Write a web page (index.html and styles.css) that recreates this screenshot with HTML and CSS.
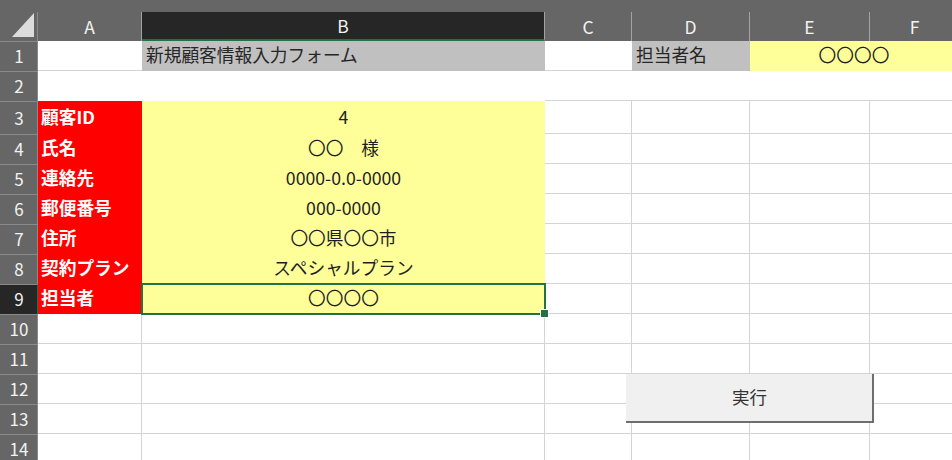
FILE: index.html
```html
<!DOCTYPE html>
<html lang="ja">
<head>
<meta charset="utf-8">
<title>新規顧客情報入力フォーム</title>
<link rel="stylesheet" href="styles.css">
</head>
<body>
<div class="sheet">
  <div class="topstrip"></div>

  <div class="corner"><svg width="38" height="29" viewBox="0 0 38 29"><polygon points="12,25 34,25 34,1" fill="#dcdcdc"/></svg></div>
  <div class="colhead">A</div>
  <div class="colhead colsel">B</div>
  <div class="colhead">C</div>
  <div class="colhead">D</div>
  <div class="colhead">E</div>
  <div class="colhead">F</div>

  <div class="rowhead">1</div>
  <div class="cell bline"></div>
  <div class="cell grayfill left">新規顧客情報入力フォーム</div>
  <div class="cell bline"></div>
  <div class="cell grayfill left">担当者名</div>
  <div class="cell yellow span2 e1">〇〇〇〇</div>

  <div class="rowhead">2</div>
  <div class="cell"></div>
  <div class="cell"></div>
  <div class="cell bline"></div>
  <div class="cell bline"></div>
  <div class="cell bline"></div>
  <div class="cell bline"></div>

  <div class="rowhead">3</div>
  <div class="cell label">顧客ID</div>
  <div class="cell yellow">4</div>
  <div class="cell grid"></div><div class="cell grid"></div><div class="cell grid"></div><div class="cell grid"></div>

  <div class="rowhead">4</div>
  <div class="cell label">氏名</div>
  <div class="cell yellow">〇〇　様</div>
  <div class="cell grid"></div><div class="cell grid"></div><div class="cell grid"></div><div class="cell grid"></div>

  <div class="rowhead">5</div>
  <div class="cell label">連絡先</div>
  <div class="cell yellow">0000-0.0-0000</div>
  <div class="cell grid"></div><div class="cell grid"></div><div class="cell grid"></div><div class="cell grid"></div>

  <div class="rowhead">6</div>
  <div class="cell label">郵便番号</div>
  <div class="cell yellow">000-0000</div>
  <div class="cell grid"></div><div class="cell grid"></div><div class="cell grid"></div><div class="cell grid"></div>

  <div class="rowhead">7</div>
  <div class="cell label">住所</div>
  <div class="cell yellow">〇〇県〇〇市</div>
  <div class="cell grid"></div><div class="cell grid"></div><div class="cell grid"></div><div class="cell grid"></div>

  <div class="rowhead">8</div>
  <div class="cell label">契約プラン</div>
  <div class="cell yellow">スペシャルプラン</div>
  <div class="cell grid"></div><div class="cell grid"></div><div class="cell grid"></div><div class="cell grid"></div>

  <div class="rowhead rowsel">9</div>
  <div class="cell label">担当者</div>
  <div class="cell yellow selected">〇〇〇〇</div>
  <div class="cell grid"></div><div class="cell grid"></div><div class="cell grid"></div><div class="cell grid"></div>

  <div class="rowhead">10</div>
  <div class="cell grid"></div><div class="cell grid"></div><div class="cell grid"></div><div class="cell grid"></div><div class="cell grid"></div><div class="cell grid"></div>

  <div class="rowhead">11</div>
  <div class="cell grid"></div><div class="cell grid"></div><div class="cell grid"></div><div class="cell grid"></div><div class="cell grid"></div><div class="cell grid"></div>

  <div class="rowhead">12</div>
  <div class="cell grid"></div><div class="cell grid"></div><div class="cell grid"></div><div class="cell grid"></div><div class="cell grid"></div><div class="cell grid"></div>

  <div class="rowhead">13</div>
  <div class="cell grid"></div><div class="cell grid"></div><div class="cell grid"></div><div class="cell grid"></div><div class="cell grid"></div><div class="cell grid"></div>

  <div class="rowhead">14</div>
  <div class="cell grid"></div><div class="cell grid"></div><div class="cell grid"></div><div class="cell grid"></div><div class="cell grid"></div><div class="cell grid"></div>

  <div class="run-button">実行</div>
</div>
</body>
</html>
```

FILE: styles.css
```css
* { box-sizing: border-box; }

html, body {
  margin: 0;
  padding: 0;
  background: #ffffff;
}

body {
  width: 952px;
  height: 460px;
  overflow: hidden;
  font-family: "Noto Sans CJK JP", "Noto Sans", sans-serif;
}

.sheet {
  position: relative;
  display: grid;
  grid-template-columns: 38px 104px 403px 87px 118px 120px 90px;
  grid-template-rows: 12px 29px 30px 30px 33px repeat(11, 30px);
  width: 960px;
}

.topstrip {
  grid-column: 1 / -1;
  background: #666666;
}

.corner {
  background: #666666;
  border-right: 1px solid #8c8c8c;
}
.corner svg { display: block; }

.colhead {
  background: #666666;
  color: #f2f2f2;
  font-size: 17.5px;
  display: flex;
  align-items: center;
  justify-content: center;
  border-right: 1px solid #a3a3a3;
  padding-bottom: 1px;
}

.colsel {
  background: #262626;
  border-bottom: 2px solid #217346;
  padding-bottom: 0;
}

.rowhead {
  background: #666666;
  color: #f2f2f2;
  font-size: 17px;
  line-height: 1;
  display: flex;
  align-items: center;
  justify-content: center;
  border-top: 1px solid #8a8a8a;
  border-right: 1px solid #8a8a8a;
  padding-left: 1px;
  padding-bottom: 2px;
}

.rowsel {
  background: #262626;
  border-right: 1px solid #217346;
}

.cell {
  font-size: 17.7px;
  line-height: 1.2;
  color: #1e1e1e;
  display: flex;
  align-items: center;
  justify-content: center;
  white-space: nowrap;
  overflow: hidden;
  padding-bottom: 2px;
}

.bline { border-bottom: 1px solid #d4d4d4; }

.grid {
  border-right: 1px solid #d4d4d4;
  border-bottom: 1px solid #d4d4d4;
}

.grayfill { background: #c0c0c0; color: #262626; }

.left {
  justify-content: flex-start;
  padding-left: 4px;
}

.yellow { background: #ffff99; }

.span2 { grid-column: span 2; }

.e1 { padding-right: 2px; }

.label {
  background: #ff0000;
  color: #ffffff;
  font-weight: bold;
  justify-content: flex-start;
  padding-left: 3px;
}

.selected {
  position: relative;
  overflow: visible;
}

.selected::after {
  content: "";
  position: absolute;
  left: -1px;
  top: -1px;
  right: -1px;
  bottom: -1px;
  border: 2px solid #217346;
}

.selected::before {
  content: "";
  position: absolute;
  right: -4px;
  bottom: -4px;
  width: 7px;
  height: 7px;
  background: #217346;
  border: 1px solid #ffffff;
  z-index: 1;
}

.run-button {
  position: absolute;
  left: 626px;
  top: 374px;
  width: 248px;
  height: 49px;
  background: #f0f0f0;
  border-right: 2px solid #6e6e6e;
  border-bottom: 2px solid #6e6e6e;
  display: flex;
  align-items: center;
  justify-content: center;
  font-size: 17.5px;
  color: #333333;
  padding-left: 1px;
  padding-bottom: 2px;
}
```
